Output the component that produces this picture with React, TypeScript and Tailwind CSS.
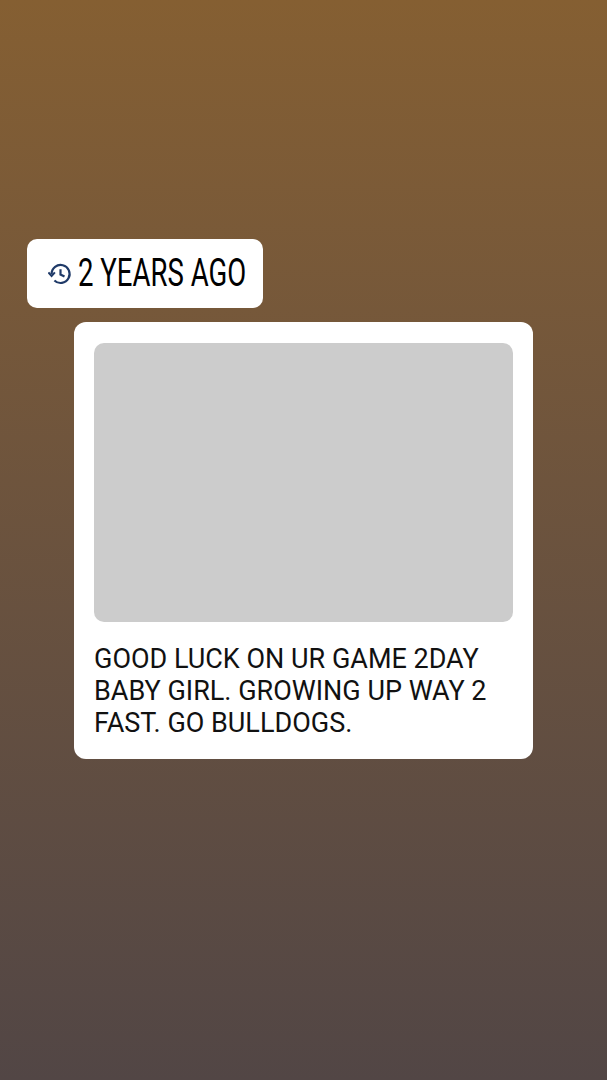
export default function App() {
  return (
    <div className="min-h-screen h-[1080px] pt-[239px] bg-gradient-to-b from-[#855f32] to-[#524645]">
      {/* Time badge */}
      <div className="ml-[27px] flex h-[69px] w-[236px] items-center rounded-[10px] bg-white pl-[21px]">
        <svg viewBox="0 0 24 24" className="h-[24px] w-[24px] shrink-0 text-[#1f3a68]" fill="none" stroke="currentColor" strokeWidth="2.2">
          <path d="M3.6 12a9 9 0 1 1 2.8 6.5" />
          <path d="M0.4 10.4 L3.6 14 L6.9 10.4" strokeWidth="2" />
          <path d="M12.5 7.2v5.3l4 2" />
        </svg>
        <span className="-mt-[2px] ml-[6px] origin-left scale-x-[0.725] whitespace-nowrap font-['Roboto',sans-serif] text-[38px] leading-none text-black">
          2 YEARS AGO
        </span>
      </div>

      {/* Post card */}
      <div className="ml-[74px] mt-[14px] h-[437px] w-[459px] rounded-[12px] bg-white px-[20px] pt-[21px]">
        <div className="h-[279px] w-[419px] rounded-[10px] bg-[#cccccc]" />
        <p className="mt-[21px] font-['Roboto',sans-serif] text-[27px] leading-[32px] text-[#111]">
          GOOD LUCK ON UR GAME 2DAY
          <br />
          BABY GIRL. GROWING UP WAY 2
          <br />
          FAST. GO BULLDOGS.
        </p>
      </div>
    </div>
  );
}
